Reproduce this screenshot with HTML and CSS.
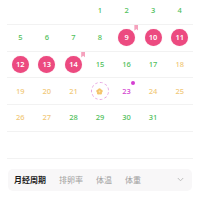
FILE: index.html
```html
<!DOCTYPE html>
<html>
<head>
<meta charset="utf-8">
<link rel="stylesheet" href="styles.css">
</head>
<body>
<div class="cal">
  <div class="row">
    <div class="cell"></div><div class="cell"></div><div class="cell"></div>
    <div class="cell g">1</div><div class="cell g">2</div><div class="cell g">3</div><div class="cell g">4</div>
  </div>
  <div class="row">
    <div class="cell g">5</div><div class="cell g">6</div><div class="cell g">7</div><div class="cell g">8</div>
    <div class="cell"><span class="dot">9</span><span class="flag"></span></div>
    <div class="cell"><span class="dot">10</span></div>
    <div class="cell"><span class="dot">11</span></div>
  </div>
  <div class="row">
    <div class="cell"><span class="dot">12</span></div>
    <div class="cell"><span class="dot">13</span></div>
    <div class="cell"><span class="dot">14</span><span class="flag"></span></div>
    <div class="cell g">15</div><div class="cell g">16</div><div class="cell g">17</div><div class="cell y">18</div>
  </div>
  <div class="row">
    <div class="cell y">19</div><div class="cell y">20</div><div class="cell y">21</div>
    <div class="cell"><span class="ovu"><svg width="7" height="7" viewBox="0 0 10 10"><g fill="#f4c46a"><circle cx="5" cy="2.6" r="2.2"/><circle cx="7.4" cy="4.4" r="2.2"/><circle cx="6.5" cy="7.2" r="2.2"/><circle cx="3.5" cy="7.2" r="2.2"/><circle cx="2.6" cy="4.4" r="2.2"/></g><circle cx="5" cy="5" r="1.3" fill="#fbe3ae"/></svg></span></div>
    <div class="cell m">23<span class="mdot"></span></div>
    <div class="cell y">24</div><div class="cell y">25</div>
  </div>
  <div class="row">
    <div class="cell y">26</div><div class="cell y">27</div><div class="cell g">28</div><div class="cell g">29</div><div class="cell g">30</div><div class="cell g">31</div><div class="cell"></div>
  </div>
  <div class="row">
    <div class="cell"></div><div class="cell"></div><div class="cell"></div><div class="cell"></div><div class="cell"></div><div class="cell"></div><div class="cell"></div>
  </div>
</div>
<div class="tabs">
  <span class="tab active">月经周期</span>
  <span class="tab">排卵率</span>
  <span class="tab">体温</span>
  <span class="tab">体重</span>
  <svg class="chev" width="7" height="5" viewBox="0 0 7 5"><path d="M0.8 1 L3.5 3.8 L6.2 1" fill="none" stroke="#b8b8b8" stroke-width="0.9"/></svg>
</div>
</body>
</html>
```

FILE: styles.css
```css
html, body {
  margin: 0;
  padding: 0;
  background: #fff;
}
body {
  width: 200px;
  height: 200px;
  overflow: hidden;
  font-family: "Noto Sans", "Noto Sans CJK SC", sans-serif;
}
.cal {
  margin: -2px 7px 0 7px;
}
.row {
  display: grid;
  grid-template-columns: repeat(7, 1fr);
  height: 26.8px;
  box-sizing: border-box;
  border-bottom: 1px solid #f2f2f2;
}
.cell {
  position: relative;
  display: flex;
  align-items: center;
  justify-content: center;
  font-size: 7.5px;
  font-weight: 500;
  line-height: 1;
}
.g { color: #4fc05a; }
.y { color: #f1c878; }
.m { color: #d33fd0; }
.dot {
  width: 17px;
  height: 17px;
  border-radius: 50%;
  background: #ec4a80;
  color: #fff;
  display: flex;
  align-items: center;
  justify-content: center;
  font-size: 7.5px;
  font-weight: 600;
  box-shadow: 0 0 1px rgba(236, 74, 128, 0.4);
}
.flag {
  position: absolute;
  top: 0;
  right: 1.5px;
  width: 4px;
  height: 6px;
  background: #f5a2bd;
  clip-path: polygon(0 0, 100% 0, 100% 100%, 50% 70%, 0 100%);
}
.ovu {
  width: 18px;
  height: 18px;
  border-radius: 50%;
  border: 1px dashed #e6a3e0;
  box-sizing: border-box;
  display: flex;
  align-items: center;
  justify-content: center;
}
.mdot {
  position: absolute;
  top: 3px;
  left: 18px;
  width: 4px;
  height: 4px;
  border-radius: 50%;
  background: #d43fd1;
}
.tabs {
  margin: 10px 8px 0 8px;
  height: 22px;
  border-radius: 5px;
  background: #f8f7f8;
  display: flex;
  align-items: center;
  padding: 0 6px;
  gap: 13px;
}
.tab {
  font-family: "Noto Sans CJK SC", sans-serif;
  font-size: 8px;
  color: #a0a0a0;
  line-height: 1;
}
.tab.active {
  color: #1c1c1c;
  font-weight: 700;
}
.chev {
  margin-left: auto;
  margin-right: 2px;
}
```
